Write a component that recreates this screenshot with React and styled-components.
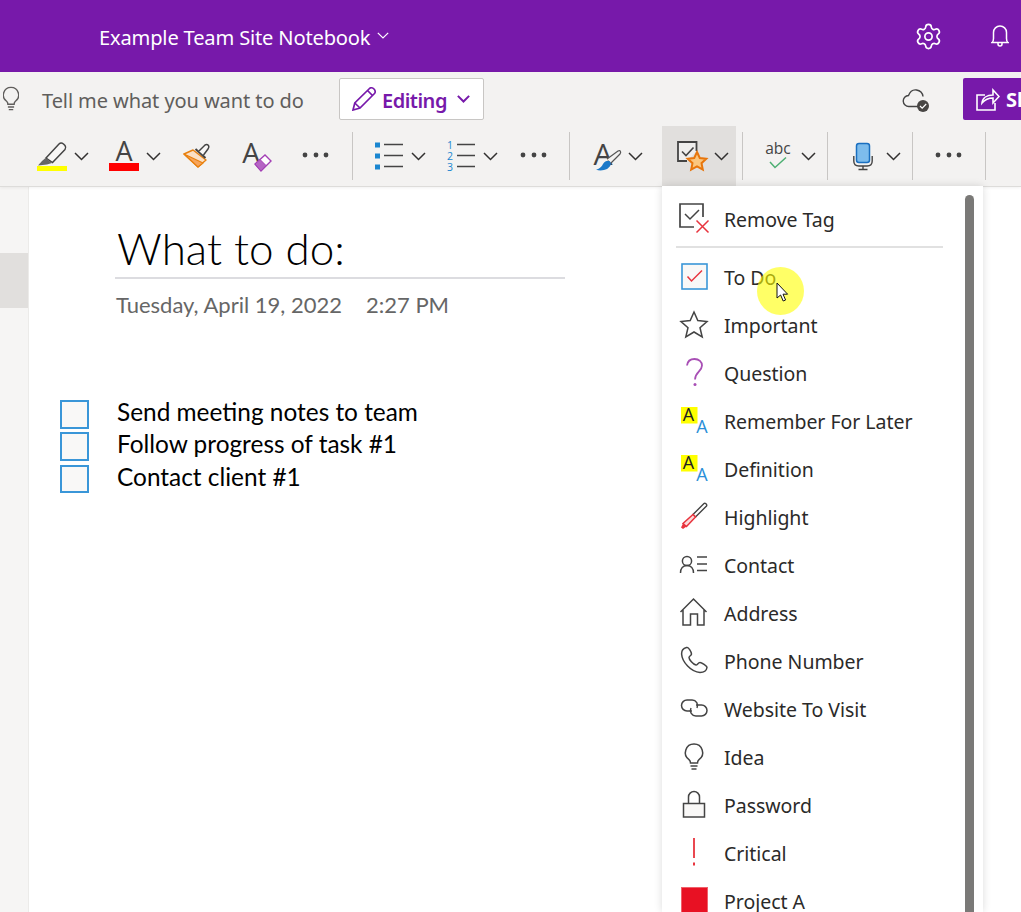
import styled, { createGlobalStyle } from "styled-components";
import { Settings } from "lucide-react";

const GlobalStyle = createGlobalStyle`
  html, body {
    margin: 0;
    padding: 0;
    background: #fff;
    overflow: hidden;
    font-family: "Noto Sans", "Open Sans", sans-serif;
  }
`;

const AppFrame = styled.div`
  position: relative;
  width: 1021px;
  height: 912px;
  overflow: hidden;
  display: flex;
  flex-direction: column;
`;

const TitleBar = styled.header`
  height: 72px;
  flex-shrink: 0;
  background: #7719aa;
  color: #fff;
  display: flex;
  align-items: center;
  padding: 0 12px 0 99px;
`;

const NotebookName = styled.div`
  font-size: 20.1px;
  letter-spacing: -0.17px;
  line-height: 28px;
  margin-right: 7px;
  margin-top: 4px;
  white-space: nowrap;
`;

const TitleIcons = styled.div`
  margin-left: auto;
  display: flex;
  align-items: center;
  gap: 48px;
`;

const Ribbon = styled.div`
  flex-shrink: 0;
  background: #f3f2f1;
  border-bottom: 1px solid #dddcda;
  box-shadow: 0 1px 3px rgba(0, 0, 0, 0.06);
  position: relative;
  z-index: 1;
`;

const SearchRow = styled.div`
  height: 54px;
  display: flex;
  align-items: center;
  padding-left: 3px;
  overflow: hidden;
`;

const SearchBulb = styled.svg`
  width: 16px;
  height: 25px;
  flex-shrink: 0;
  margin-top: -1px;
`;

const SearchHint = styled.div`
  margin-left: 23px;
  margin-top: 2px;
  width: 297px;
  flex-shrink: 0;
  color: #605e5c;
  font-size: 20px;
  letter-spacing: -0.08px;
  white-space: nowrap;
`;

const ModeButton = styled.button`
  width: 145px;
  height: 42px;
  flex-shrink: 0;
  box-sizing: border-box;
  background: #fff;
  border: 1px solid #c8c6c4;
  border-radius: 2px;
  color: #7719aa;
  font: 600 20px "Noto Sans", sans-serif;
  letter-spacing: -0.5px;
  display: flex;
  align-items: center;
  padding: 0 0 0 12px;
  gap: 6px;

  & > span {
    width: 69px;
    text-align: left;
    margin-top: 2px;
  }
`;

const CloudStatus = styled.div`
  margin-left: 418px;
  margin-top: 3px;
  width: 28px;
  height: 24px;
  flex-shrink: 0;
  display: flex;
`;

const ShareButton = styled.button`
  margin-left: 33px;
  width: 130px;
  height: 42px;
  flex-shrink: 0;
  background: #7719aa;
  border: 0;
  border-radius: 2px 0 0 2px;
  color: #fff;
  font: 700 20px "Noto Sans", sans-serif;
  display: flex;
  align-items: center;
  padding: 0 0 0 13px;
  gap: 6px;
`;

const ToolRow = styled.div`
  height: 60px;
  display: flex;
  align-items: center;
  padding-left: 37px;
`;

const Tool = styled.div`
  display: flex;
  align-items: center;
  gap: ${(props) => props.$gap || 7}px;
  flex-shrink: 0;
  margin-left: ${(props) => props.$ml || 0}px;
  ${(props) =>
    props.$active &&
    `
    align-self: stretch;
    background: #e1dfdd;
    padding: 0 7px 0 15px;
  `}
`;

const ToolSeparator = styled.div`
  width: 1px;
  height: 48px;
  flex-shrink: 0;
  background: #c8c6c4;
  margin-left: ${(props) => props.$ml || 0}px;
`;

const PageArea = styled.div`
  flex: 1;
  display: flex;
  min-height: 0;
`;

const PageRail = styled.nav`
  width: 28px;
  flex-shrink: 0;
  background: #f6f5f4;
  border-right: 1px solid #ecebe9;
  padding-top: 66px;
`;

const RailCurrent = styled.div`
  height: 55px;
  background: #e1dfdd;
`;

const PageSheet = styled.main`
  flex: 1;
  background: #fff;
  padding: 35px 0 0 31px;
`;

const PageHead = styled.div`
  margin-left: 55px;
  width: 450px;
`;

const PageTitle = styled.h1`
  margin: 0;
  padding: 0 0 0 2px;
  height: 57px;
  box-sizing: border-box;
  border-bottom: 2px solid #dcdce0;
  font: 300 44px/52px Lato, sans-serif;
  color: #000;
`;

const PageDate = styled.div`
  display: flex;
  gap: 24px;
  margin-top: 11px;
  padding-left: 1px;
  font: 400 22px/30px Lato, sans-serif;
  color: #666;
`;

const TodoList = styled.ul`
  list-style: none;
  margin: 80px 0 0;
  padding: 0;
`;

const TodoItem = styled.li`
  height: 32.4px;
  display: flex;
  align-items: flex-start;
  font: 400 24.4px/24px Lato, sans-serif;
  color: #000;
  white-space: nowrap;
`;

const TodoBox = styled.span`
  width: 29px;
  height: 28.5px;
  box-sizing: border-box;
  border: 2px solid #3a96d8;
  background: #f9f8f7;
  margin-right: 28px;
  flex-shrink: 0;
`;

const TagMenu = styled.div`
  position: absolute;
  left: 662px;
  top: 186px;
  width: 321px;
  bottom: 0;
  background: #fff;
  box-shadow: 0 0 8px rgba(0, 0, 0, 0.14);
  padding-top: 10px;
  box-sizing: border-box;
  overflow: hidden;
  z-index: 2;
`;

const MenuThumb = styled.div`
  position: absolute;
  left: 303px;
  top: 9px;
  bottom: 0;
  width: 9px;
  border-radius: 5px 5px 0 0;
  background: #7a7977;
`;

const MenuRow = styled.div`
  height: 48px;
  display: flex;
  align-items: center;
  gap: 15px;
  padding-left: 17px;
  font-size: 19.5px;
  color: #2b2a29;
  letter-spacing: -0.03px;
  white-space: nowrap;
`;

const MenuLabel = styled.span`
  margin-top: -2px;
`;

const MenuRule = styled.div`
  height: 2px;
  margin: 2px 40px 6px 14px;
  background: #e1e1e1;
`;

const RowIcon = styled.svg`
  width: 30px;
  height: 34px;
  flex-shrink: 0;
  overflow: visible;
`;

const ToolIcon = styled.svg`
  width: ${(props) => props.$w || 30}px;
  height: 30px;
  flex-shrink: 0;
  overflow: visible;
`;

const PointerHalo = styled.div`
  position: absolute;
  left: 757px;
  top: 267px;
  width: 47px;
  height: 48px;
  border-radius: 50%;
  background: rgba(255, 255, 0, 0.6);
  z-index: 3;
`;

const PointerArrow = styled.svg`
  position: absolute;
  left: 776px;
  top: 282px;
  width: 14px;
  height: 21px;
  z-index: 4;
`;

const iconText = `"Open Sans", "Noto Sans", sans-serif`;

const Chevron = ({ color = "#323130", w = 15, stroke = 1.5 }) => (
  <svg width={w} height={w * 0.6} viewBox="0 0 15 9" fill="none">
    <path d="M1 1l6.500 6.500L14 1" stroke={color} strokeWidth={stroke * (15 / w)} />
  </svg>
);

const Dots = () => (
  <ToolIcon $w={26} viewBox="0 0 26 30" fill="#444">
    <circle cx="3" cy="14" r="2.400" />
    <circle cx="14" cy="14" r="2.400" />
    <circle cx="24" cy="14" r="2.400" />
  </ToolIcon>
);

const GlyphA = ({ x = 15, y = 28, size = 16, fill = "#000" }) => (
  <text x={x} y={y} textAnchor="middle" fontSize={size} fontFamily={iconText} fill={fill}>
    A
  </text>
);

const stickyIcon = (
  <>
    <rect x="2" y="2" width="16.500" height="16.500" fill="#ffff00" />
    <GlyphA x={9.5} y={16} size={18} fill="#222" />
    <GlyphA x={23} y={28} size={18} fill="#2b8fd8" />
  </>
);

const bulbShape = (
  <>
    <path d="M15 3a8.600 8.600 0 0 0-5 15.600c1.200 1 1.500 2 1.500 3.400h7c0-1.400.3-2.400 1.500-3.400A8.600 8.600 0 0 0 15 3z" />
    <path d="M11.500 25h7M12.500 28h5" />
  </>
);

const tags = [
  {
    label: "To Do",
    icon: (
      <>
        <rect x="3" y="3" width="25" height="25" fill="#f9f8f7" stroke="#3a96d8" strokeWidth="1.600" />
        <path d="M8.500 15.500l4 4.500L23 9.500" fill="none" stroke="#e8343e" strokeWidth="1.500" />
      </>
    ),
  },
  {
    label: "Important",
    icon: (
      <path
        d="M15 3l3.800 8.600 9.200.9-7 6.200 2.200 9.300L15 23l-8.200 5 2.200-9.300-7-6.200 9.200-.9z"
        fill="none"
        stroke="#444"
        strokeWidth="1.500"
      />
    ),
  },
  {
    label: "Question",
    icon: (
      <>
        <path
          d="M8 8.500C8.500 4.500 11.500 2 15.500 2c4.500 0 7.500 3 7.500 6.500 0 6-7 6.500-7 14"
          fill="none"
          stroke="#a84fb5"
          strokeWidth="1.800"
        />
        <circle cx="16" cy="27.500" r="1.500" fill="#a84fb5" />
      </>
    ),
  },
  { label: "Remember For Later", icon: stickyIcon },
  { label: "Definition", icon: stickyIcon },
  {
    label: "Highlight",
    icon: (
      <>
        <path d="M14 13.500L25 2.500c1-1 3.500 1 2.500 2.500L16.500 16z" fill="#fff" stroke="#444" strokeWidth="1.400" />
        <path d="M14 13.500l2.500 2.500-9 9.500-3.500-3z" fill="#fbdada" stroke="#e8343e" strokeWidth="1.500" />
        <path d="M4 22.500l3.500 3L4 28l-2-1.500z" fill="#e8343e" />
      </>
    ),
  },
  {
    label: "Contact",
    icon: (
      <g fill="none" stroke="#444" strokeWidth="1.500">
        <circle cx="8" cy="12" r="4.600" />
        <path d="M1.500 24c0-4.500 2.500-7.500 6.500-7.500s6.500 3 6.500 7.500" />
        <path d="M18 8h10M18 15h10M18 21.500h10" />
      </g>
    ),
  },
  {
    label: "Address",
    icon: (
      <path
        d="M1.500 15L14.500 2l13 13M4 13v15h7.500V17h7v11H25V13"
        fill="none"
        stroke="#444"
        strokeWidth="1.500"
      />
    ),
  },
  {
    label: "Phone Number",
    icon: (
      <path
        d="M7.500 2.600C4 3.500 2.500 6 2.600 9c.5 8 9.400 18 18.400 18.500 4 0 6.500-2 7-5 0-1.500-5.500-5-7-5-2 0-2.500 2.500-4 2.500-3-.5-7-5.500-7-7.500 0-1.500 2.500-2 2.500-3.500 0-2-3-7-4.500-6.400z"
        fill="none"
        stroke="#444"
        strokeWidth="1.500"
      />
    ),
  },
  {
    label: "Website To Visit",
    icon: (
      <g fill="none" stroke="#444" strokeWidth="1.500">
        <path d="M13 18H8a5.500 5.500 0 0 1 0-11h5a5.500 5.500 0 0 1 5 8" />
        <path d="M17 12h5.500a5.500 5.500 0 0 1 0 11H17a5.500 5.500 0 0 1-5-8" />
      </g>
    ),
  },
  {
    label: "Idea",
    icon: (
      <g fill="none" stroke="#444" strokeWidth="1.500">
        {bulbShape}
      </g>
    ),
  },
  {
    label: "Password",
    icon: (
      <g stroke="#444" strokeWidth="1.500">
        <path d="M9.500 14V8a5.500 5.500 0 0 1 11 0v6" fill="none" />
        <rect x="4.500" y="14.500" width="21" height="13.500" fill="#f9f8f7" />
      </g>
    ),
  },
  {
    label: "Critical",
    icon: (
      <>
        <path d="M15 1v20" stroke="#e8343e" strokeWidth="1.800" />
        <rect x="14" y="25.500" width="2" height="3" fill="#e8343e" />
      </>
    ),
  },
  {
    label: "Project A",
    icon: <rect x="2.500" y="2.500" width="26" height="28" fill="#e81123" stroke="#f0606a" />,
  },
];

const App = () => {
  return (
    <AppFrame>
      <GlobalStyle />
      <TitleBar>
        <NotebookName>Example Team Site Notebook</NotebookName>
        <Chevron color="#fff" w={12} stroke={1.2} />
        <TitleIcons>
          <Settings size={29} color="#fff" strokeWidth={1.4} />
          <svg width="18" height="22" viewBox="0 0 18 22" fill="none" stroke="#fff" strokeWidth="1.500">
            <path d="M1 17.500c1.500-1 1.500-2 1.500-4V7.500a6.500 6.500 0 0 1 13 0v6c0 2 0 3 1.500 4z" />
            <path d="M7 18v1a2 2 0 0 0 4 0v-1" />
          </svg>
        </TitleIcons>
      </TitleBar>

      <Ribbon>
        <SearchRow>
          <SearchBulb viewBox="6 2 18 27" fill="none" stroke="#605e5c" strokeWidth="1.600">
            {bulbShape}
          </SearchBulb>
          <SearchHint>Tell me what you want to do</SearchHint>
          <ModeButton>
            <svg width="24" height="24" viewBox="0 0 24 24" fill="none" stroke="#7719aa" strokeWidth="1.700">
              <path d="M1 23l1.800-7L17.500 1.500c1-1 3-1 4.500.5s1.500 3.500.5 4.500L8 21z" />
              <path d="M2.800 16L8 21M15.500 3.500l5 5" />
            </svg>
            <span>Editing</span>
            <Chevron color="#7719aa" w={13} stroke={2} />
          </ModeButton>
          <CloudStatus>
            <svg width="28" height="24" viewBox="0 0 28 24" fill="none">
              <path
                d="M16 17.500H7a5.500 5.500 0 0 1-.5-11C8 2.500 11 .5 14.500 1c3.500.5 6 3 6.500 6.500"
                stroke="#444"
                strokeWidth="1.400"
              />
              <circle cx="21" cy="17" r="6" fill="#484644" />
              <path d="M18 17l2.200 2.200 4-4.200" stroke="#fff" strokeWidth="1.200" />
            </svg>
          </CloudStatus>
          <ShareButton>
            <svg width="24" height="23" viewBox="0 0 24 23" fill="none" stroke="#fff" strokeWidth="1.600">
              <path d="M9 7H1v15h18v-7" />
              <path d="M6 15c.5-5 5-8 11-8V2l6 6.500-6 6.500v-5c-5 0-8 1.500-11 5z" />
            </svg>
            <span>Share</span>
          </ShareButton>
        </SearchRow>

        <ToolRow>
          <Tool>
            <ToolIcon viewBox="0 0 30 30">
              <path d="M9 17L22 3q2-2 4.500 0L28 4.500q1.500 2 0 4L15.500 21.500z" fill="#f7f6f5" stroke="#444" strokeWidth="1.500" />
              <path d="M8.500 17l6.500 5-5 1.500-9 1 4-4.500z" fill="#666" />
              <rect x="0" y="25" width="30" height="5" fill="#ffff00" />
            </ToolIcon>
            <Chevron />
          </Tool>
          <Tool $ml={20}>
            <ToolIcon viewBox="0 0 30 30">
              <GlyphA x={15} y={20} size={27} fill="#444" />
              <rect x="0" y="22" width="30" height="8" fill="#ff0000" />
            </ToolIcon>
            <Chevron />
          </Tool>
          <Tool $ml={22}>
            <ToolIcon $w={27} viewBox="0 0 27 30">
              <path d="M1 13l9-4 13 10-8 7z" fill="#fce0c4" stroke="#e8810f" strokeWidth="1.500" strokeLinejoin="round" />
              <path d="M1 13l19 9-5 4z" fill="#f7a55c" stroke="#e8810f" strokeWidth="1.200" strokeLinejoin="round" />
              <path d="M12.500 8l10 9" stroke="#444" strokeWidth="2" fill="none" />
              <path d="M16 10l6-6q2-1 3.500.5 1 1.500-.5 3.500l-4.500 6" fill="#f7f6f5" stroke="#444" strokeWidth="1.500" />
            </ToolIcon>
          </Tool>
          <Tool $ml={33}>
            <ToolIcon $w={27} viewBox="0 0 27 30">
              <GlyphA x={8} y={22} size={28} fill="#444" />
              <path d="M12 23l10-9 6 6-10 10z" fill="#fff" stroke="#a33fb5" strokeWidth="1.400" />
              <path d="M12 23l5-4.500 6 6-5 5.500z" fill="#b565c4" stroke="#a33fb5" strokeWidth="1" />
            </ToolIcon>
          </Tool>
          <Tool $ml={32}>
            <Dots />
          </Tool>
          <ToolSeparator $ml={24} />

          <Tool $ml={22} $gap={8}>
            <ToolIcon $w={28} viewBox="0 0 28 30">
              <g fill="#1a86d0">
                <rect x="0" y="1.500" width="5" height="5" />
                <rect x="0" y="12.500" width="5" height="5" />
                <rect x="0" y="23.500" width="5" height="5" />
              </g>
              <path d="M9 3.500h19M9 14.500h19M9 25.500h19" stroke="#444" strokeWidth="1.400" />
            </ToolIcon>
            <Chevron />
          </Tool>
          <Tool $ml={21} $gap={8}>
            <ToolIcon $w={28} viewBox="0 0 28 30">
              <text fontSize="10.500" fontFamily={iconText} fill="#1a86d0">
                <tspan x="0" y="8">1</tspan>
                <tspan x="0" y="19">2</tspan>
                <tspan x="0" y="30">3</tspan>
              </text>
              <path d="M10 3.500h18M10 14.500h18M10 25.500h18" stroke="#444" strokeWidth="1.400" />
            </ToolIcon>
            <Chevron />
          </Tool>
          <Tool $ml={22}>
            <Dots />
          </Tool>
          <ToolSeparator $ml={23} />

          <Tool $ml={24}>
            <ToolIcon $w={27} viewBox="0 0 27 30">
              <GlyphA x={9} y={24} size={30} fill="#444" />
              <path d="M13 18l11-8q2-1 2.500.5.5 1-.5 2.500l-9 9" fill="#f3f2f1" stroke="#555" strokeWidth="1.200" />
              <path d="M2 28.500c4-.5 6-3.500 7-5.500 2-3 5-4 7-2.500 2 2.500 0 5.500-3 7.500-3 1.500-8 2-11 .5z" fill="#1a78c8" />
            </ToolIcon>
            <Chevron />
          </Tool>
          <Tool $active $ml={19}>
            <ToolIcon viewBox="0 0 30 30">
              <path d="M19.500 10V1H1v19h9" fill="#efeeed" stroke="#444" strokeWidth="1.800" />
              <path d="M5 10.500l4 4 7.500-8" fill="none" stroke="#444" strokeWidth="1.600" />
              <path d="M20 11l2.800 6 6.500.8-4.800 4.400 1.300 6.400-5.800-3.200-5.800 3.200 1.300-6.400-4.800-4.400 6.500-.8z" fill="#fbc77f" stroke="#e8760c" strokeWidth="2" />
            </ToolIcon>
            <Chevron />
          </Tool>
          <ToolSeparator $ml={6} />

          <Tool $ml={23} $gap={11}>
            <ToolIcon $w={24} viewBox="0 0 24 30">
              <text x="12" y="13" textAnchor="middle" fontSize="15.500" fontFamily={iconText} fill="#444">
                abc
              </text>
              <path d="M4 21l5 5.500L20 16.500" fill="none" stroke="#4caf72" strokeWidth="1.500" />
            </ToolIcon>
            <Chevron />
          </Tool>
          <ToolSeparator $ml={11} />

          <Tool $ml={25} $gap={13}>
            <ToolIcon $w={20} viewBox="0 0 20 30">
              <rect x="3.500" y="2.500" width="13" height="19" rx="2.500" fill="#7dbcec" stroke="#1a6fc0" strokeWidth="1.500" />
              <path d="M.8 15v5c0 3 2 5 5 5h8.400c3 0 5-2 5-5v-5M10 25v3M5.500 28.500h9" fill="none" stroke="#444" strokeWidth="1.400" />
            </ToolIcon>
            <Chevron />
          </Tool>
          <ToolSeparator $ml={11} />

          <Tool $ml={22}>
            <Dots />
          </Tool>
          <ToolSeparator $ml={24} />
        </ToolRow>
      </Ribbon>

      <PageArea>
        <PageRail>
          <RailCurrent />
        </PageRail>
        <PageSheet>
          <PageHead>
            <PageTitle>What to do:</PageTitle>
            <PageDate>
              <span>Tuesday, April 19, 2022</span>
              <span>2:27 PM</span>
            </PageDate>
          </PageHead>
          <TodoList>
            <TodoItem>
              <TodoBox />
              Send meeting notes to team
            </TodoItem>
            <TodoItem>
              <TodoBox />
              Follow progress of task #1
            </TodoItem>
            <TodoItem>
              <TodoBox />
              Contact client #1
            </TodoItem>
          </TodoList>
        </PageSheet>
      </PageArea>

      <TagMenu>
        <MenuRow>
          <RowIcon viewBox="0 0 30 34">
            <path d="M24 14V1H1v23h14" fill="none" stroke="#444" strokeWidth="1.700" />
            <path d="M6 11l5 5 9-9" fill="none" stroke="#444" strokeWidth="1.500" />
            <path d="M17.500 17.500l12 12M29.500 17.500l-12 12" stroke="#e8343e" strokeWidth="1.500" />
          </RowIcon>
          <MenuLabel>Remove Tag</MenuLabel>
        </MenuRow>
        <MenuRule />
        {tags.map((tag) => (
          <MenuRow key={tag.label}>
            <RowIcon viewBox="0 0 30 34">{tag.icon}</RowIcon>
            <MenuLabel>{tag.label}</MenuLabel>
          </MenuRow>
        ))}
        <MenuThumb />
      </TagMenu>

      <PointerHalo />
      <PointerArrow viewBox="0 0 14 21">
        <path d="M1 1v15l3.600-3 2.600 6 2.400-1-2.600-5.800h4.600z" fill="#fff" stroke="#111" strokeWidth="1" />
      </PointerArrow>
    </AppFrame>
  );
};

export default App;
